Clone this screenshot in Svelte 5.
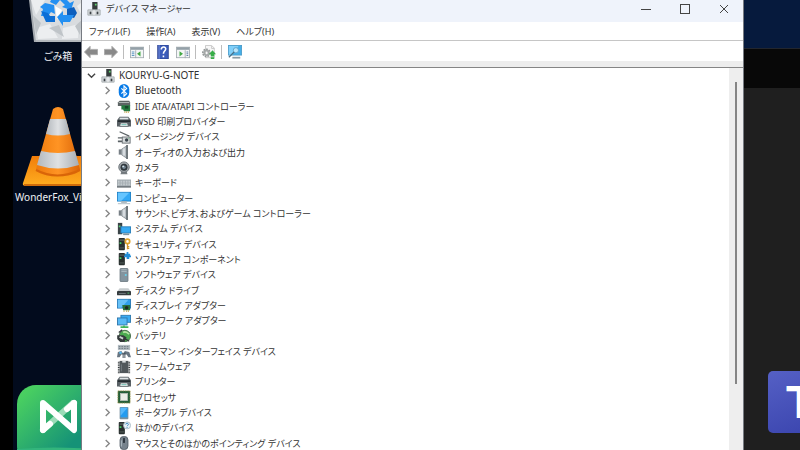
<script lang="ts">
    interface Device {
        icon: string;
        label: string;
        latin?: boolean;
    }

    const menus = ["ファイル(F)", "操作(A)", "表示(V)", "ヘルプ(H)"];

    const devices: Device[] = [
        { icon: "bluetooth", label: "Bluetooth", latin: true },
        { icon: "ide", label: "IDE ATA/ATAPI コントローラー" },
        { icon: "printer", label: "WSD 印刷プロバイダー" },
        { icon: "imaging", label: "イメージング デバイス" },
        { icon: "speaker", label: "オーディオの入力および出力" },
        { icon: "camera", label: "カメラ" },
        { icon: "keyboard", label: "キーボード" },
        { icon: "monitor", label: "コンピューター" },
        { icon: "speaker", label: "サウンド、ビデオ、およびゲーム コントローラー" },
        { icon: "system", label: "システム デバイス" },
        { icon: "security", label: "セキュリティ デバイス" },
        { icon: "component", label: "ソフトウェア コンポーネント" },
        { icon: "software", label: "ソフトウェア デバイス" },
        { icon: "disk", label: "ディスク ドライブ" },
        { icon: "display", label: "ディスプレイ アダプター" },
        { icon: "network", label: "ネットワーク アダプター" },
        { icon: "battery", label: "バッテリ" },
        { icon: "hid", label: "ヒューマン インターフェイス デバイス" },
        { icon: "firmware", label: "ファームウェア" },
        { icon: "printer", label: "プリンター" },
        { icon: "processor", label: "プロセッサ" },
        { icon: "portable", label: "ポータブル デバイス" },
        { icon: "other", label: "ほかのデバイス" },
        { icon: "mouse", label: "マウスとそのほかのポインティング デバイス" },
    ];

    const tools = [
        ["back", "forward"],
        ["tree"],
        ["help", "actions"],
        ["update"],
        ["scan"],
    ];

    let expanded = $state(true);
</script>

{#snippet tower()}
    <rect x="2" y="1" width="7" height="14" rx="1" fill="#29302f" />
    <rect x="3" y="3" width="5" height="1" fill="#6c7573" />
    <rect x="3" y="6" width="2" height="2" fill="#43cf62" />
    <rect x="3" y="12" width="5" height="1" fill="#59615f" />
{/snippet}

{#snippet glyph(name: string)}
    <svg class="glyph" viewBox="0 0 16 16" aria-hidden="true">
        {#if name === "root"}
            <rect x="6" y="0" width="6" height="9" fill="#343b3b" />
            <rect x="9" y="2" width="2" height="2" fill="#60d070" />
            <path d="M1 15V9h14v6z" fill="#d6dadd" stroke="#a5abae" />
            <rect x="3" y="11" width="2" height="3" fill="#3c4145" />
            <rect x="11" y="11" width="2" height="3" fill="#3c4145" />
            <path d="M8 9v6" stroke="#f8f8f8" />
        {:else if name === "bluetooth"}
            <rect x="2" y="0" width="12" height="16" rx="6" fill="#087be8" />
            <path d="M5 5l6 6-3 3V2l3 3-6 6" fill="none" stroke="#fff" stroke-width="1.3" />
        {:else if name === "ide"}
            <path d="M1 4l2-2h11l1 2v4H1z" fill="#5d6464" />
            <path d="M2 4h12" stroke="#b7bfbe" />
            <path d="M5 7h10v7H8l-1-2H5z" fill="#257b40" />
            <rect x="9" y="8" width="4" height="3" fill="#17482a" />
            <path d="M9 14v2M11 14v2M13 14v2" stroke="#c3a451" />
        {:else if name === "printer"}
            <path d="M3 2h10l3 4v7H0V6z" fill="#596065" />
            <path d="M3 4h10" stroke="#dfe4e6" stroke-width="2" />
            <path d="M1 7h14" stroke="#252c30" stroke-width="2" />
            <path d="M4 9h8l1 4H3z" fill="#eef5f5" stroke="#60686b" />
            <path d="M5 11h6" stroke="#65b8aa" />
        {:else if name === "imaging"}
            <path d="M3 2l11 5M1 9h10" stroke="#5e6568" stroke-width="1.5" />
            <path d="M1 13h5" stroke="#596064" stroke-width="2" />
            <rect x="6" y="8" width="9" height="7" fill="#d5d9db" stroke="#666d71" />
            <circle cx="11" cy="11.5" r="2" fill="#374249" />
            <rect x="13" y="9" width="1" height="1" fill="#47ae64" />
        {:else if name === "speaker"}
            <path d="M2 5h4v6H2z" fill="#777f85" />
            <path d="M5 5l6-4v14l-6-4z" fill="#b6bdc2" stroke="#8c9499" />
            <path d="M8 4v8" stroke="#dce1e4" stroke-width="2" />
            <path d="M11.5 0v16" stroke="#666e73" stroke-width="2" />
        {:else if name === "camera"}
            <path d="M4 15h8l-1-3H5z" fill="#777d81" />
            <circle cx="8" cy="7" r="6" fill="#a3a9ad" stroke="#666d72" />
            <circle cx="8" cy="7" r="4" fill="#30383e" />
            <circle cx="8" cy="7" r="2" fill="#738592" />
            <circle cx="7" cy="6" r="1" fill="#e0edf5" />
        {:else if name === "keyboard"}
            <rect x="0" y="4" width="16" height="9" fill="#a3abb0" />
            <path d="M1 6h14M1 8h14M1 10h14" stroke="#d5dbde" stroke-dasharray="2 1" />
            <path d="M0 12.5h16" stroke="#454c51" />
        {:else if name === "monitor"}
            <rect x="0.5" y="1.5" width="15" height="10" fill="#32a8f5" stroke="#187dc4" />
            <path d="M1 2h13L5 11H1z" fill="#65c5ff" />
            <path d="M5 12h6v1H5zM1 14.5h14" fill="#9caab2" stroke="#a7b5bd" />
        {:else if name === "system"}
            <rect x="1" y="1" width="5" height="13" fill="#3b4448" />
            <rect x="2" y="4" width="2" height="2" fill="#55c872" />
            <rect x="4.5" y="5.5" width="11" height="7" fill="#36aaf3" stroke="#267db9" />
            <path d="M7 14h7" stroke="#7f949f" stroke-width="2" />
        {:else if name === "security"}
            {@render tower()}
            <circle cx="12" cy="5" r="2.5" fill="none" stroke="#dfa42d" stroke-width="2" />
            <path d="M12 7v7M12 11h2M12 13h2" stroke="#d09528" stroke-width="1.5" />
        {:else if name === "component"}
            {@render tower()}
            <path d="M9 2h2V0h2v2h2v2h1v2h-2v2h-3V6H8V4h1z" fill="#248ed7" />
        {:else if name === "software"}
            <rect x="3.5" y="0.5" width="9" height="15" rx="1" fill="#84949e" stroke="#6c7981" />
            <path d="M5 2h6M5 4h6" stroke="#adbac1" />
            <rect x="9" y="7" width="2" height="2" fill="#66d4f1" />
        {:else if name === "disk"}
            <path d="M3 6h10l3 4H0z" fill="#c6cbcd" />
            <rect x="0" y="9" width="16" height="5" rx="1" fill="#343b3e" />
            <path d="M2 12h8" stroke="#737d81" />
            <rect x="12" y="11" width="2" height="1" fill="#55cf73" />
        {:else if name === "display"}
            <rect x="0.5" y="1.5" width="15" height="10" fill="#2f9fe9" stroke="#2475b3" />
            <path d="M1 2h12L5 11H1z" fill="#67c1f7" />
            <path d="M6 8h9v6H7z" fill="#28703c" />
            <circle cx="11" cy="11" r="2" fill="#1f2a24" />
            <path d="M8 14v2M11 14v2M13 14v2" stroke="#bda24d" />
        {:else if name === "network"}
            <rect x="4.5" y="1.5" width="11" height="8" fill="#3aabf2" stroke="#2b77ad" />
            <rect x="0.5" y="4.5" width="11" height="8" fill="#58b9f5" stroke="#2a74a9" />
            <path d="M4 15h9M8 13v2" stroke="#3fb55b" stroke-width="2" />
        {:else if name === "battery"}
            <circle cx="9" cy="8" r="6.5" fill="#4baa50" stroke="#426747" />
            <path d="M7 4c3-2 5 0 7 2" fill="none" stroke="#b9e2a7" stroke-width="2" />
            <path d="M2 4l4-3M1 8h6l3 2-2 4H4l-3-3zM9 11l5 3" fill="#343a3b" stroke="#343a3b" stroke-width="1.5" />
            <path d="M3 9l4 2" stroke="#cbd2d2" stroke-width="2" />
        {:else if name === "hid"}
            <rect x="1" y="1" width="14" height="6" fill="#b3bcc2" />
            <path d="M2 3h12M2 5h12" stroke="#68747d" stroke-dasharray="2 1" />
            <path d="M0 15l1-6 4-1 2 3 2-3 5 1 2 6h-3l-2-3H5l-2 3z" fill="#687581" />
            <circle cx="4" cy="10" r="1.5" fill="#56b8ed" />
            <path d="M7 10v6M9 10v6" stroke="#303d48" />
        {:else if name === "firmware"}
            <rect x="3" y="1" width="10" height="14" fill="#50575b" />
            <path d="M2 2v13M14 2v13" stroke="#343a3d" stroke-width="2" stroke-dasharray="1 1" />
            <path d="M6 1h4v2H6z" fill="#d7dcde" />
            <path d="M5 5v8" stroke="#778086" />
        {:else if name === "processor"}
            <rect x="1" y="1" width="14" height="14" fill="#245f3a" stroke="#b29d51" stroke-dasharray="1 1" />
            <rect x="4" y="4" width="8" height="8" fill="#ebeee7" stroke="#b4beb3" />
        {:else if name === "portable"}
            <rect x="3" y="1" width="10" height="14" rx="1" fill="#77919f" />
            <rect x="4" y="2" width="8" height="11" fill="#239cf0" />
            <path d="M4 2h8l-8 9z" fill="#56b8fa" />
        {:else if name === "other"}
            {@render tower()}
            <circle cx="11.5" cy="5" r="4" fill="#e9f2f7" stroke="#a9bac3" />
            <path d="M10 4c0-2 3-2 3 0 0 1-1.5 1-1.5 2M11.5 7v1" fill="none" stroke="#2379b5" />
        {:else if name === "mouse"}
            <rect x="3.5" y="0.5" width="9" height="15" rx="4" fill="#77838d" stroke="#4f5a63" />
            <path d="M5 5v7" stroke="#b4c0c8" />
            <rect x="7" y="2" width="2" height="6" rx="1" fill="#242d35" />
        {:else if name === "back"}
            <path d="M0.5 8L7 1.5V5h8.500v6H7v3.500z" fill="#898989" stroke="#a8a8a8" />
        {:else if name === "forward"}
            <path d="M15.5 8L9 1.5V5H0.500v6H9v3.500z" fill="#898989" stroke="#a8a8a8" />
        {:else if name === "tree" || name === "actions"}
            <rect x="0.5" y="2.5" width="15" height="12" fill="#f4f6f6" stroke="#a3abb0" />
            <path d="M1 4h14" stroke="#94a0a8" stroke-width="3" />
            {#if name === "tree"}
                <path d="M6.5 6v9" stroke="#a2acb1" />
                <path d="M2 8h3M2 10h3M2 12h3" stroke="#4b8dbe" />
                <path d="M12 7v6l-4-3z" fill="#42a944" />
            {:else}
                <path d="M10.5 6v9" stroke="#a2acb1" />
                <path d="M12 8h2M12 10h2M12 12h2" stroke="#4b6f9b" />
                <path d="M4 7v6l4-3z" fill="#42a944" />
            {/if}
        {:else if name === "help"}
            <rect x="2" y="0" width="12" height="16" fill="#3c5cba" stroke="#283e8b" />
            <path d="M3.5 0v16" stroke="#7890d9" />
            <path d="M6 5c0-4 6-3 5 0-0.500 2-2.500 2-2.500 5M8.500 12v2" fill="none" stroke="#fff" stroke-width="1.8" />
        {:else if name === "update"}
            <path d="M4 0.500h7l3 3v11H4z" fill="#f7f7f7" stroke="#c4c4c4" />
            <path d="M11 1v3h3" fill="none" stroke="#c4c4c4" />
            <circle cx="5" cy="9" r="4" fill="none" stroke="#929797" stroke-width="2" stroke-dasharray="2 1" />
            <circle cx="5" cy="9" r="2.5" fill="none" stroke="#a5a9a9" stroke-width="2" />
            <path d="M12 6l4 4.500h-2V13h-4v-2.500H8zM10 14h4v2h-4z" fill="#37ae48" />
        {:else if name === "scan"}
            <rect x="0.5" y="0.5" width="15" height="11" fill="#45afe8" stroke="#4c9bc9" />
            <path d="M1 1h11L5 11H1z" fill="#80d0fa" />
            <path d="M5 14.5h9" stroke="#8b9ba4" stroke-width="2" />
            <circle cx="9" cy="6" r="3" fill="#b9e5fa" stroke="#5b9ec6" />
            <path d="M7 8l-6 6" stroke="#496f86" stroke-width="1.5" />
        {/if}
    </svg>
{/snippet}

{#snippet chevron(open: boolean)}
    <svg class="chevron" viewBox="0 0 10 10" aria-hidden="true">
        {#if open}
            <path d="M1 3l4 4 4-4" fill="none" stroke="#444" stroke-width="1.5" />
        {:else}
            <path d="M3 1l4 4-4 4" fill="none" stroke="#858585" stroke-width="1.5" />
        {/if}
    </svg>
{/snippet}

<main class="desktop">
    <div class="edge"></div>

    <section class="shortcuts">
        <div class="shortcut bin">
            <svg viewBox="0 0 90 43" aria-hidden="true">
                <path d="M17 0h58l-5 42H22z" fill="#d9dcdf" />
                <path d="M18 0h14l-9 15zM23 28l14-4 8 14-20 1zM50 28l16-4-1 14-16 1zM64 6l8-6-2 18z" fill="#eceef0" />
                <path d="M20 15l8 8-5 12zM36 28l10-3 5 12zM62 26l7-6-2 15z" fill="#bfc4c8" />
                <path d="M42 6l7 4-5 10z" fill="#fff" />
                <path d="M32 3l9 2 1 9-4-2-3 4h-7l2-7-3-2z" fill="#2490f2" />
                <path d="M28 11l7 2 2 3h5v6h-9z" fill="#0d6fd6" />
                <path d="M38 0h16l3 3 4-2-3 9-9-3 3-2-5-5-4 5-6-3z" fill="#2490f2" />
                <path d="M54 9l7-2 3 6-3 5-7-2z" fill="#0d5fbd" />
                <path d="M44 17l6-6v4h11l-4 7h-7v4z" fill="#2490f2" />
                <path d="M22 41h48" stroke="#b3b8bc" stroke-width="2" />
                <path d="M17 0l5 42" stroke="#a6abb0" stroke-width="2" />
            </svg>
            <span>ごみ箱</span>
        </div>
        <div class="shortcut">
            <svg viewBox="0 0 90 82" aria-hidden="true">
                <defs>
                    <linearGradient id="cone" x1="0" x2="1">
                        <stop offset="0" stop-color="#ee7a0c" />
                        <stop offset="0.5" stop-color="#ff9424" />
                        <stop offset="1" stop-color="#dc6508" />
                    </linearGradient>
                    <linearGradient id="band" x1="0" x2="1">
                        <stop offset="0" stop-color="#b3b8bd" />
                        <stop offset="0.5" stop-color="#dfe1e3" />
                        <stop offset="1" stop-color="#a7adb2" />
                    </linearGradient>
                    <linearGradient id="base" x1="0" y1="0" x2="0" y2="1">
                        <stop offset="0" stop-color="#f17d09" />
                        <stop offset="1" stop-color="#ffae20" />
                    </linearGradient>
                </defs>
                <path d="M19 50h52l10 27q1 3-3 3H13q-4 0-3-3z" fill="url(#base)" />
                <path d="M11 79h68" stroke="#cf6b0a" stroke-width="2" />
                <path d="M40 3q5-4 10 0l17 60q-2 7-22 7T23 63z" fill="url(#cone)" />
                <path d="M37 13h16l4 15q-12 3-24 0z" fill="url(#band)" />
                <path d="M28 45q17 4 34 0l4 14q-21 7-42 0z" fill="url(#band)" />
                <path d="M23 64q21 11 44 0" fill="none" stroke="#d96508" stroke-width="2" />
            </svg>
            <span class="long">WonderFox_Vi</span>
        </div>
        <svg class="mind" viewBox="0 0 90 80" aria-hidden="true">
            <defs>
                <linearGradient id="green" x1="0" y1="0" x2="1" y2="1">
                    <stop offset="0.1" stop-color="#49cf61" />
                    <stop offset="0.7" stop-color="#159277" />
                </linearGradient>
            </defs>
            <rect x="4" y="0" width="82" height="80" rx="19" fill="url(#green)" />
            <path d="M30 45l31-28" stroke="#9bdcb8" stroke-width="6" />
            <path d="M30 45V18l31 27V18" fill="none" stroke="#fff" stroke-width="6" stroke-linecap="round" stroke-linejoin="round" />
            <path d="M30 45l7-6M54 24l7-6" stroke="#fff" stroke-width="6" stroke-linecap="round" />
            <path d="M4 64q35-3 78 0v16H4z" fill="#33b57c" />
        </svg>
    </section>

    <section class="window">
        <header>
            {@render glyph("root")}
            <h1>デバイス マネージャー</h1>
            <div class="controls">
                <button aria-label="最小化">
                    <svg viewBox="0 0 10 10"><path d="M0 5.5h10" /></svg>
                </button>
                <button aria-label="最大化">
                    <svg viewBox="0 0 10 10"><rect x="0.5" y="0.5" width="9" height="9" /></svg>
                </button>
                <button aria-label="閉じる">
                    <svg viewBox="0 0 10 10"><path d="M1 1l8 8M9 1l-8 8" /></svg>
                </button>
            </div>
        </header>

        <nav>
            {#each menus as menu}
                <button>{menu}</button>
            {/each}
        </nav>

        <div class="toolbar">
            {#each tools as group}
                <div class="group">
                    {#each group as tool}
                        <button aria-label={tool}>{@render glyph(tool)}</button>
                    {/each}
                </div>
            {/each}
        </div>

        <div class="pane">
            <div class="tree">
                <div class="row root">
                    <button aria-label="KOURYU-G-NOTE" onclick={() => (expanded = !expanded)}>
                        {@render chevron(expanded)}
                    </button>
                    {@render glyph("root")}
                    <span class="latin">KOURYU-G-NOTE</span>
                </div>
                {#if expanded}
                    {#each devices as device}
                        <div class="row">
                            <button aria-label={device.label}>{@render chevron(false)}</button>
                            {@render glyph(device.icon)}
                            <span class:latin={device.latin}>{device.label}</span>
                        </div>
                    {/each}
                {/if}
            </div>
            <div class="scrollbar"><div class="thumb"></div></div>
        </div>
    </section>

    <aside>
        <div class="sky"></div>
        <div class="bar"></div>
        <div class="dock">
            <div class="teams">T</div>
        </div>
    </aside>
</main>

<style>
    :global(body) {
        margin: 0;
        overflow: hidden;
    }

    .desktop {
        display: grid;
        grid-template-columns: 13px 68px minmax(0, 1fr) 56px;
        height: 100vh;
        overflow: hidden;
        background: #020b1d;
        color: #333;
        font-family: "Noto Sans", "Noto Sans CJK JP", sans-serif;
        font-size: 9px;
        font-feature-settings: "palt";
    }

    button {
        display: flex;
        align-items: center;
        justify-content: center;
        padding: 0;
        border: none;
        background: none;
        color: inherit;
        font: inherit;
        font-feature-settings: inherit;
    }

    .edge {
        background: #000;
    }

    .shortcuts {
        display: flex;
        flex-direction: column;
        align-items: flex-start;
        overflow: hidden;
        height: 100vh;
    }

    .shortcut {
        display: flex;
        flex-direction: column;
        align-items: center;
        width: 90px;
        flex-shrink: 0;
        color: #eef0f4;
        font-size: 10px;
        line-height: 18px;
    }

    .shortcut svg {
        width: 90px;
    }

    .bin {
        gap: 4px;
        margin-bottom: 41px;
    }

    .long {
        align-self: flex-start;
        padding-left: 2px;
        white-space: nowrap;
    }

    .mind {
        width: 90px;
        height: 80px;
        flex-shrink: 0;
        margin-top: 179px;
    }

    .window {
        display: flex;
        flex-direction: column;
        height: 100vh;
        box-sizing: border-box;
        border-left: 1px solid #777b82;
        border-right: 1px solid #777b82;
        background: #fff;
        min-width: 0;
    }

    .glyph {
        width: 14px;
        height: 14px;
        flex-shrink: 0;
    }

    header {
        display: flex;
        align-items: center;
        gap: 5px;
        height: 22px;
        flex-shrink: 0;
        padding-left: 5px;
        background: #eff3fb;
    }

    h1 {
        margin: 0;
        padding-bottom: 4px;
        font-size: 9px;
        font-weight: 400;
        line-height: 18px;
    }

    header .glyph {
        margin-bottom: 4px;
    }

    .controls {
        display: flex;
        margin-left: auto;
        padding-bottom: 5px;
    }

    .controls button {
        width: 39px;
        height: 17px;
    }

    .controls svg {
        width: 10px;
        height: 10px;
        fill: none;
        stroke: #444;
    }

    nav {
        display: flex;
        align-items: center;
        gap: 16px;
        height: 18px;
        flex-shrink: 0;
        padding-left: 7px;
        border-bottom: 1px solid #c6c6c6;
    }

    .toolbar {
        display: flex;
        align-items: center;
        height: 18px;
        flex-shrink: 0;
        padding-left: 2px;
        padding-top: 2px;
        border-bottom: 6px solid #ededed;
    }

    .group {
        display: flex;
        gap: 6px;
        padding-right: 5px;
        margin-right: 6px;
        border-right: 1px solid #bcbcbc;
    }

    .group:last-child {
        border-right: none;
    }

    .pane {
        display: flex;
        flex: 1;
        min-height: 0;
        border-top: 1px solid #858585;
    }

    .tree {
        display: flex;
        flex-direction: column;
        flex: 1;
        min-width: 0;
        margin-bottom: -1px;
    }

    .row {
        display: flex;
        flex: 1;
        align-items: center;
        gap: 4px;
        min-height: 15px;
        padding-left: 20px;
        line-height: 15px;
        white-space: nowrap;
    }

    .row button {
        width: 11px;
    }

    .root {
        padding-left: 4px;
    }

    .latin {
        font-size: 10px;
    }

    .chevron {
        width: 9px;
        height: 9px;
    }

    .scrollbar {
        display: flex;
        justify-content: center;
        width: 14px;
        box-sizing: border-box;
        padding: 14px 0 66px;
        background: #eee;
    }

    .thumb {
        width: 2px;
        background: #858585;
    }

    aside {
        display: flex;
        flex-direction: column;
        overflow: hidden;
    }

    .sky {
        height: 48px;
        background: #061a3d;
        border-bottom: 1px solid #22262e;
    }

    .bar {
        height: 39px;
        background: #080808;
    }

    .dock {
        display: flex;
        flex: 1;
        flex-direction: column;
        justify-content: flex-end;
        padding: 0 0 17px 24px;
        background: #1f1f1f;
    }

    .teams {
        width: 62px;
        height: 62px;
        box-sizing: border-box;
        padding-left: 18px;
        border-radius: 5px;
        background: linear-gradient(160deg, #5560c5, #3943ad);
        color: #fff;
        font-family: "Liberation Sans", sans-serif;
        font-size: 46px;
        font-weight: 700;
        line-height: 62px;
    }
</style>
